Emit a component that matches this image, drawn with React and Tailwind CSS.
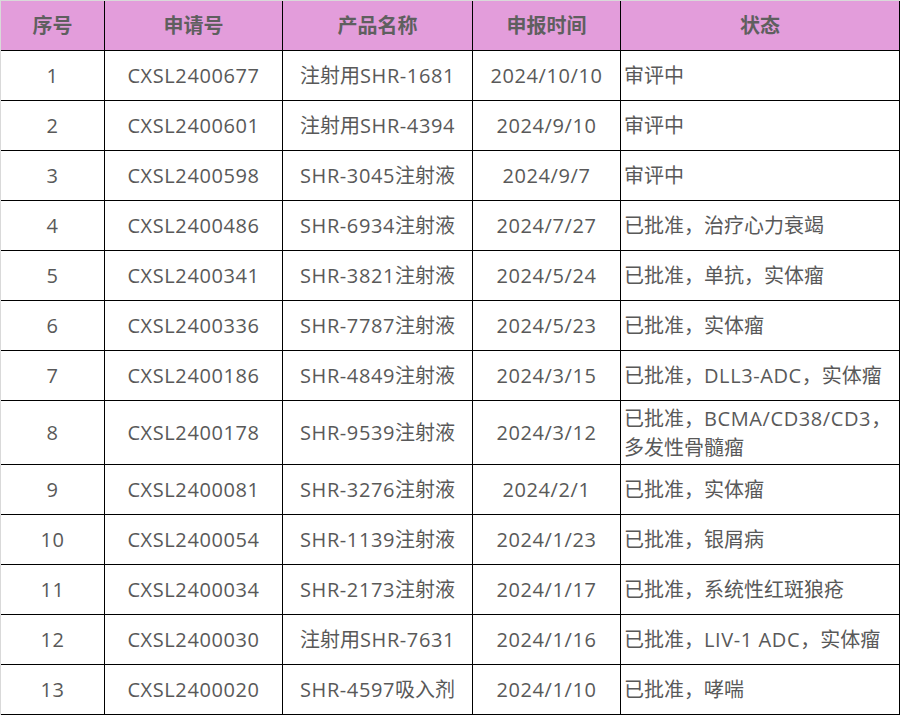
import React from 'react';

// 申报记录表：表头 + 13 行数据
const rows = [
  ['1', 'CXSL2400677', '注射用SHR-1681', '2024/10/10', '审评中'],
  ['2', 'CXSL2400601', '注射用SHR-4394', '2024/9/10', '审评中'],
  ['3', 'CXSL2400598', 'SHR-3045注射液', '2024/9/7', '审评中'],
  ['4', 'CXSL2400486', 'SHR-6934注射液', '2024/7/27', '已批准，治疗心力衰竭'],
  ['5', 'CXSL2400341', 'SHR-3821注射液', '2024/5/24', '已批准，单抗，实体瘤'],
  ['6', 'CXSL2400336', 'SHR-7787注射液', '2024/5/23', '已批准，实体瘤'],
  ['7', 'CXSL2400186', 'SHR-4849注射液', '2024/3/15', '已批准，DLL3-ADC，实体瘤'],
  ['8', 'CXSL2400178', 'SHR-9539注射液', '2024/3/12', ['已批准，BCMA/CD38/CD3，', '多发性骨髓瘤']],
  ['9', 'CXSL2400081', 'SHR-3276注射液', '2024/2/1', '已批准，实体瘤'],
  ['10', 'CXSL2400054', 'SHR-1139注射液', '2024/1/23', '已批准，银屑病'],
  ['11', 'CXSL2400034', 'SHR-2173注射液', '2024/1/17', '已批准，系统性红斑狼疮'],
  ['12', 'CXSL2400030', '注射用SHR-7631', '2024/1/16', '已批准，LIV-1 ADC，实体瘤'],
  ['13', 'CXSL2400020', 'SHR-4597吸入剂', '2024/1/10', '已批准，哮喘'],
];

const headers = ['序号', '申请号', '产品名称', '申报时间', '状态'];

const cell = 'flex items-center border-r border-b border-black';

// 西文部分字距稍宽，单独包一层
const Txt = ({ s }) =>
  s.split(/([A-Za-z0-9\-\/ ]+)/).map((part, i) =>
    /^[A-Za-z0-9\-\/ ]+$/.test(part) ? (
      <span key={i} className="tracking-[0.6px]">{part}</span>
    ) : (
      part
    )
  );

export default function App() {
  return (
    <div className="min-h-[716px] bg-white">
      <div className="w-[900px] border-t border-l border-[#d9d9d9] font-['Open_Sans','Noto_Sans_CJK_SC',sans-serif] text-[20px] text-[#595959]">
        <div className="grid grid-cols-[104px_178px_190px_148px_279px]">
          {headers.map((h) => (
            <div key={h} className={`${cell} h-[50px] justify-center bg-[#e39ddb] font-bold text-[#5f5f5f]`}>
              {h}
            </div>
          ))}
          {rows.map((r) => {
            const tall = Array.isArray(r[4]);
            const h = tall ? 'h-[64px]' : 'h-[50px]';
            return (
              <React.Fragment key={r[0]}>
                <div className={`${cell} ${h} justify-center`}><Txt s={r[0]} /></div>
                <div className={`${cell} ${h} justify-center`}><Txt s={r[1]} /></div>
                <div className={`${cell} ${h} justify-center`}><Txt s={r[2]} /></div>
                <div className={`${cell} ${h} justify-center`}><Txt s={r[3]} /></div>
                <div className={`${cell} ${h} pl-[3px] leading-[29px]`}>
                  {tall ? (
                    <div>
                      <Txt s={r[4][0]} />
                      <br />
                      <Txt s={r[4][1]} />
                    </div>
                  ) : (
                    <Txt s={r[4]} />
                  )}
                </div>
              </React.Fragment>
            );
          })}
        </div>
      </div>
    </div>
  );
}
